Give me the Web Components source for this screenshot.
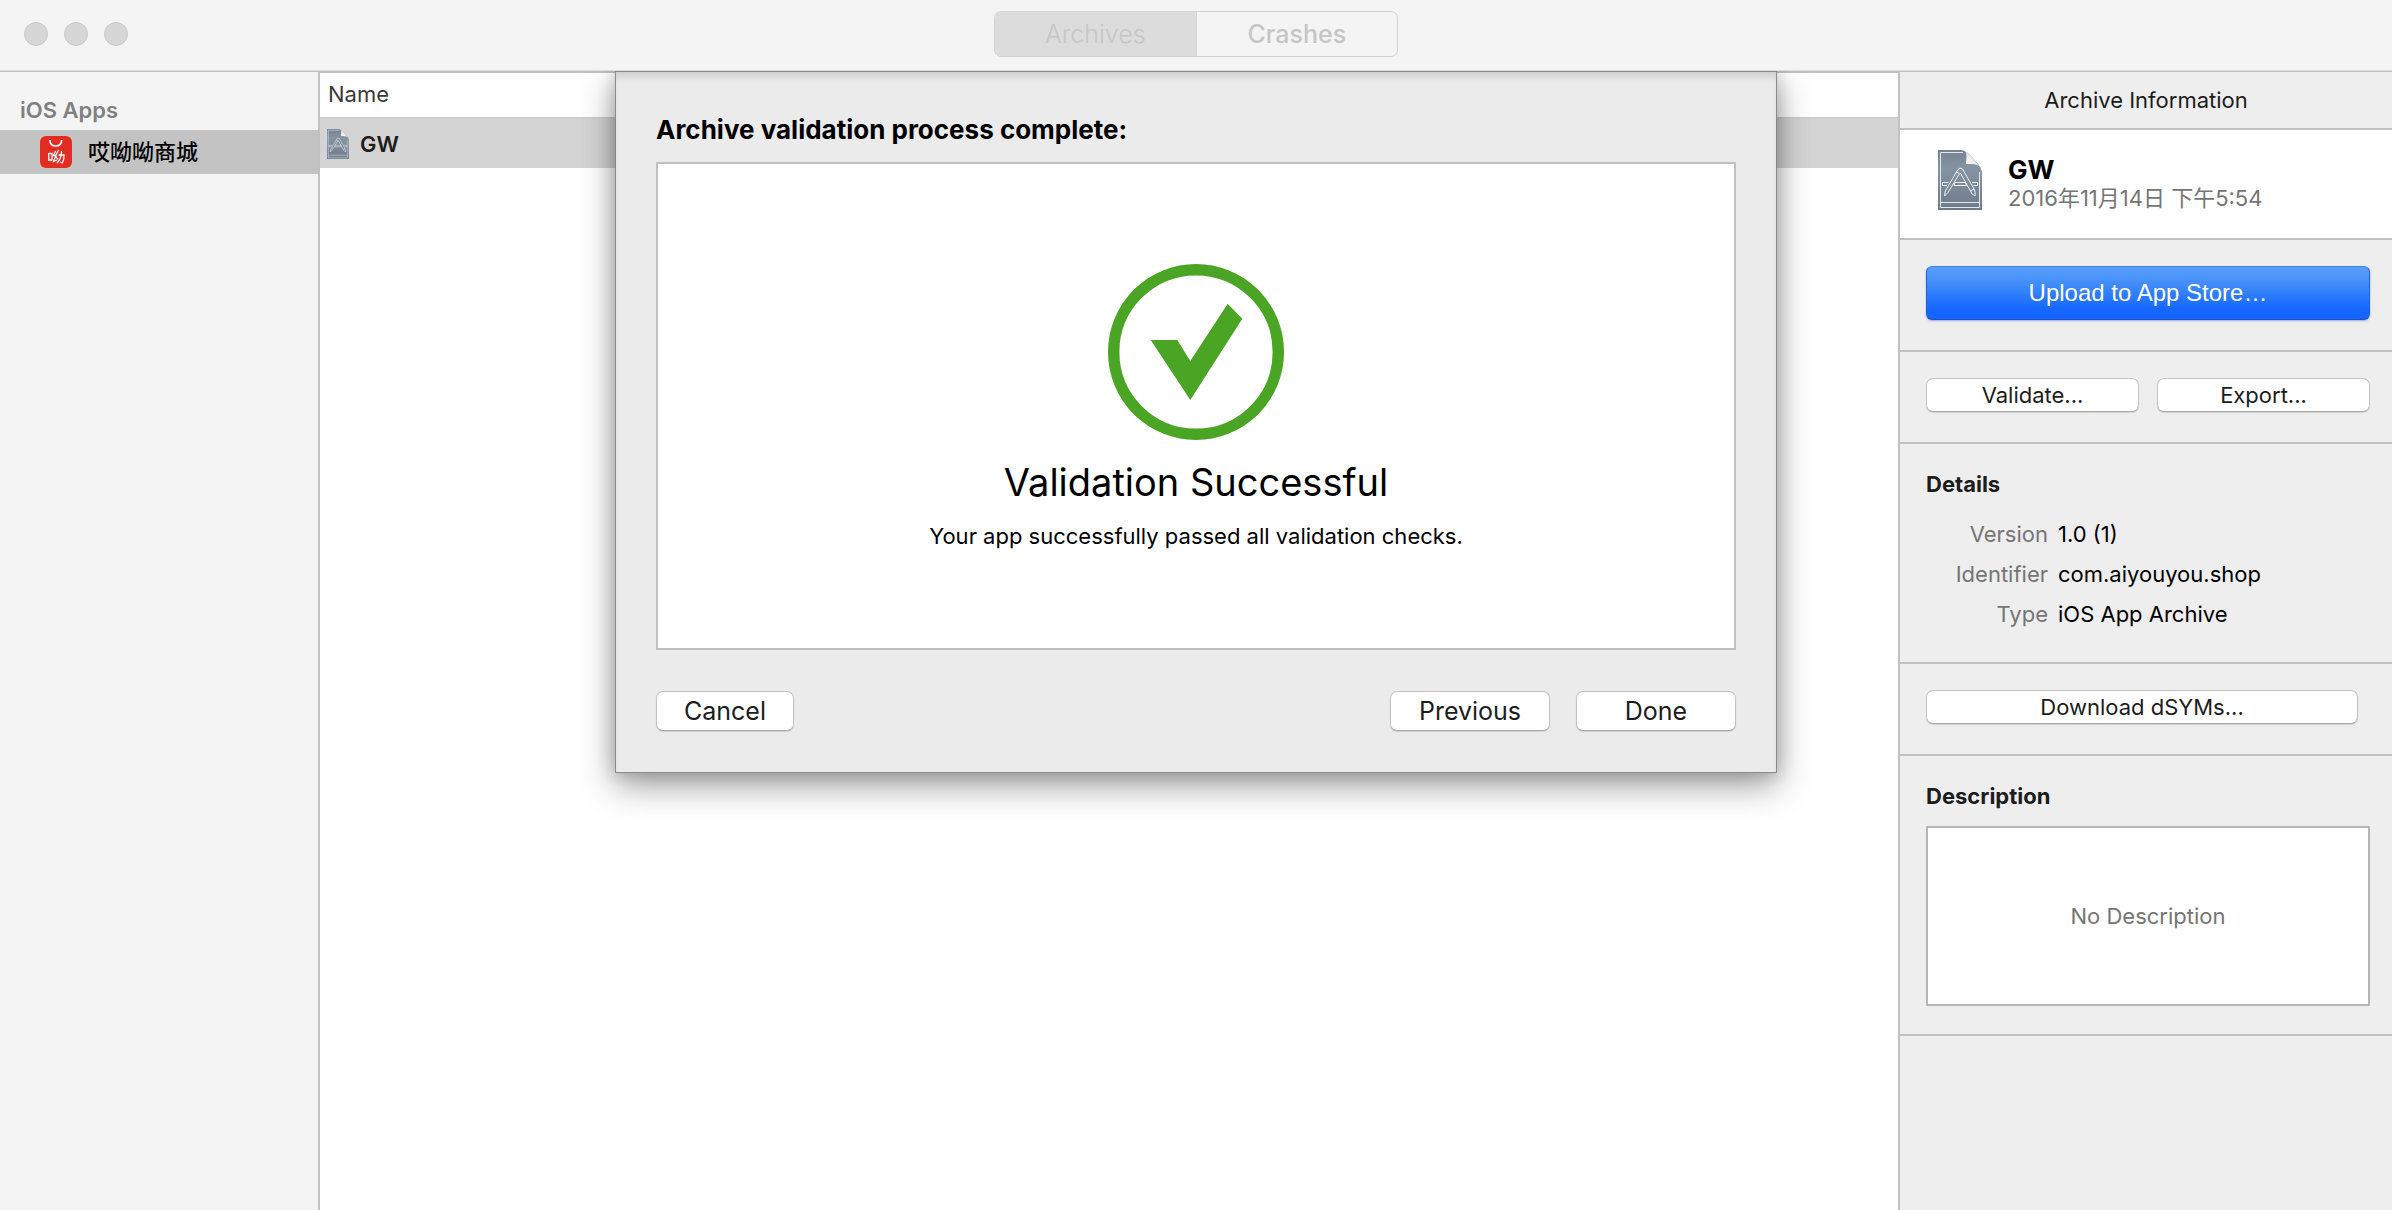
<!DOCTYPE html>
<html lang="en">
<head>
<meta charset="utf-8">
<title>Archives</title>
<style>
  html, body { margin: 0; height: 100%; }
  body {
    --line: #c1c1c1;
    --chrome: #f4f4f4;
    --panel: #eeeeee;
    --ink: #1c1c1c;
    --muted: #757575;
    font: 22px/28px Inter, "Noto Sans CJK SC", sans-serif;
    color: #000;
  }
</style>
</head>
<body>
<organizer-window></organizer-window>

<script>
const define = (name, html) => {
  const template = document.createElement('template');
  template.innerHTML = '<style>*{box-sizing:border-box}:host{display:block;box-sizing:border-box}</style>' + html;
  customElements.define(name, class extends HTMLElement {
    constructor() {
      super();
      this.attachShadow({ mode: 'open' }).append(template.content.cloneNode(true));
    }
  });
};

/* Push button: regular, size="large" for sheets, kind="primary" for the main action */
define('push-button', `
  <style>
    button {
      display: block; width: 100%; height: 34px; padding: 0 26px; margin: 0;
      font: inherit; line-height: 28px; color: var(--ink); text-align: center; white-space: nowrap;
      background: #fff; border: 1px solid #c3c3c3; border-bottom-color: #a9a9a9; border-radius: 7px;
      box-shadow: 0 1px 1px rgba(0,0,0,.12);
    }
    :host([size=large]) button { height: 40px; font-size: 25px; }
    :host([kind=primary]) button {
      height: 54px; font-family: "Liberation Sans", sans-serif; font-size: 24px; color: #fff;
      background: linear-gradient(#5a9ff9, #3f8bf8 35%, #1667ff 80%, #1464ff);
      border-color: #3f86ea #2560e0 #1c4fd0; border-radius: 6px;
      box-shadow: 0 1px 2px rgba(30,70,190,.4);
    }
  </style>
  <button type="button"><slot></slot></button>`);

define('archive-icon', `
  <style>:host { flex: none; width: 44px; height: 60px } svg { display: block; width: 100%; height: 100%; overflow: visible }</style>
  <svg viewBox="0 0 44 60" aria-hidden="true" fill="none">
    <defs>
      <linearGradient id="g" x2="0" y2="1"><stop stop-color="#758392"/><stop offset=".3" stop-color="#8593a3"/><stop offset="1" stop-color="#6e7b89"/></linearGradient>
      <linearGradient id="f" x1="0" y1="1" x2="1" y2="0"><stop stop-color="#fff"/><stop offset=".6" stop-color="#e4e4e4"/><stop offset="1" stop-color="#fafafa"/></linearGradient>
    </defs>
    <path d="M0 0H22C26 0 29 2 32 5L40 14Q44 19 44 24V60H0Z" fill="url(#g)"/>
    <path d="M25 2.5H2.5V57.5H41.5V22" stroke="#e3e9ee" stroke-width="1"/>
    <path d="M2.5 52.500H41.500" stroke="#e3e9ee" stroke-width="1"/>
    <path d="M27 1C29 3 28.500 9 28 14C33 14 38 14 41 16L34 7Z" fill="url(#f)"/>
    <g stroke="#eef2f5" stroke-width="1">
      <path d="M4.500 32.500H10.500M4.500 32.500V35.500H9M17 32.500H27.500L28.500 35.500H16ZM34 32.500H39.500V35.500H35.500"/>
      <path d="M18.500 22L21.500 23.700L10 42.500L6.500 46L7.300 41Z"/>
      <path d="M18.500 22L20 19.500L22 18L24.500 19L36 39Q38 42 37 46Q33 44 32.500 41L22 22.500"/>
      <path d="M32.500 41L36 39"/>
    </g>
  </svg>`);

define('shop-icon', `
  <style>:host { flex: none; width: 32px; height: 32px } svg { display: block }</style>
  <svg width="32" height="32" viewBox="0 0 32 32" aria-hidden="true">
    <rect width="32" height="32" rx="6" fill="#e22c24"/>
    <path d="M9.800 4C10 8 12.500 10 15.700 10S21.500 8 21.700 4" fill="none" stroke="#fff" stroke-width="1.700"/>
    <g fill="none" stroke="#fff" stroke-width="1.300">
      <path d="M8.800 17V25M8.800 17.500H12V24H8.800M15.500 15L13.500 19.500H16L13.500 25.500L17 24M18.500 14L15.500 20L18 23.500M18.500 19H24Q24 25 22 27L20.500 26M21.500 15Q21.500 23 17 27"/>
    </g>
  </svg>`);

define('window-toolbar', `
  <style>
    :host { background: var(--chrome); border-bottom: 1px solid #dcdcdc; flex: none }
    header { display: grid; grid-template-columns: 1fr auto 1fr; align-items: center; height: 70px; padding: 0 24px 2px }
    .lights { display: flex; gap: 16px }
    .lights button { width: 24px; height: 24px; padding: 0; border: 1px solid #c6c6c6; border-radius: 50%; background: #d6d6d6 }
    .tabs { display: flex; width: 404px; height: 46px; border: 1px solid #d2d2d2; border-radius: 7px; overflow: hidden }
    .tabs button { flex: 1; font: inherit; font-size: 25px; padding: 0; border: 0; background: none; color: #c6c6c6; font-weight: 500 }
    .tabs button[aria-pressed=true] { background: #dcdcdc; font-weight: 300; border-right: 1px solid #d2d2d2 }
  </style>
  <header>
    <div class="lights">
      <button type="button" aria-label="Close"></button><button type="button" aria-label="Minimize"></button><button type="button" aria-label="Zoom"></button>
    </div>
    <div class="tabs">
      <button type="button" aria-pressed="true">Archives</button>
      <button type="button" aria-pressed="false">Crashes</button>
    </div>
  </header>`);

define('app-sidebar', `
  <style>
    :host { background: var(--chrome); border-top: 1px solid var(--line); border-right: 2px solid var(--line); padding-top: 24px }
    h2 { margin: 0 0 6px; padding: 0 20px; font: inherit; font-weight: 600; color: #808080 }
    a { display: flex; align-items: center; gap: 16px; height: 44px; padding: 0 40px; background: #c3c3c3; color: #000; font-weight: 500; text-decoration: none }
  </style>
  <nav>
    <h2>iOS Apps</h2>
    <a href="#app"><shop-icon></shop-icon><span><slot></slot></span></a>
  </nav>`);

define('archive-list', `
  <style>
    :host { background: #fff; border-top: 2px solid var(--line) }
    table { width: 100%; border-collapse: collapse }
    th { height: 44px; padding: 0 8px 2px; text-align: left; font-weight: 400; color: #3a3a3a }
    td { height: 51px; padding: 2px 6px 0; background: #d4d4d4; border-top: 1px solid #cacaca; font-weight: 600; color: var(--ink) }
    div { display: flex; align-items: center; gap: 10px }
    archive-icon { width: 24px; height: 30px }
  </style>
  <table>
    <thead><tr><th scope="col">Name</th></tr></thead>
    <tbody><tr><td><div><archive-icon></archive-icon><slot></slot></div></td></tr></tbody>
  </table>`);

define('panel-section', `
  <style>
    :host { padding: 26px 22px 30px 26px; border-bottom: 2px solid var(--line) }
    :host([roomy]) { padding-bottom: 34px }
    :host([snug]) { padding-bottom: 28px }
  </style><slot></slot>`);

define('archive-inspector', `
  <style>
    :host { background: var(--panel); border-top: 1px solid var(--line); border-left: 2px solid var(--line) }
    h2 { margin: 0; height: 58px; padding: 14px; border-bottom: 2px solid var(--line); font: inherit; text-align: center; color: var(--ink) }
    .item { display: flex; align-items: center; gap: 26px; height: 110px; padding: 20px 38px; background: #fff; border-bottom: 2px solid var(--line) }
    .item archive-icon { align-self: flex-start }
    .item strong { display: block; font-size: 26px; font-weight: 700 }
    time { color: var(--muted) }
    .pair { display: grid; grid-template-columns: 1fr 1fr; gap: 18px }
    h3, label { display: block; margin: 0; font: inherit; font-weight: 700; color: var(--ink) }
    dl { display: grid; grid-template-columns: 122px 1fr; gap: 12px 10px; margin: 22px 0 0 }
    dt { text-align: right; color: var(--muted) }
    dd { margin: 0 }
    .inset { padding-right: 12px }
    textarea {
      display: block; width: 100%; height: 180px; margin: 16px 0 0; padding: 74px 16px 0; resize: none;
      border: 2px solid #b5b5b5; border-radius: 0; background: #fff; font: inherit; text-align: center; color: #000; overflow: hidden
    }
    textarea::placeholder { color: var(--muted); opacity: 1 }
  </style>
  <aside>
    <h2>Archive Information</h2>
    <div class="item"><archive-icon></archive-icon><div><strong>GW</strong><time datetime="2016-11-14T17:54">2016年11月14日 下午5:54</time></div></div>
    <panel-section><push-button kind="primary">Upload to App Store…</push-button></panel-section>
    <panel-section><div class="pair"><push-button>Validate...</push-button><push-button>Export...</push-button></div></panel-section>
    <panel-section roomy>
      <h3>Details</h3>
      <dl>
        <dt>Version</dt><dd>1.0 (1)</dd>
        <dt>Identifier</dt><dd>com.aiyouyou.shop</dd>
        <dt>Type</dt><dd>iOS App Archive</dd>
      </dl>
    </panel-section>
    <panel-section><div class="inset"><push-button>Download dSYMs...</push-button></div></panel-section>
    <panel-section snug>
      <label for="description">Description</label>
      <textarea id="description" placeholder="No Description"></textarea>
    </panel-section>
  </aside>`);

define('success-mark', `
  <style>svg { display: block }</style>
  <svg width="176" height="176" viewBox="0 0 176 176" role="img" aria-label="Success">
    <circle cx="88" cy="88" r="82.300" fill="none" stroke="#4ba524" stroke-width="11.400"/>
    <path d="M42.700 76H69.300L82.300 97L119.700 39.700L134.300 54.700L82.300 136Z" fill="#4ba524"/>
  </svg>`);

define('validation-sheet', `
  <style>
    :host {
      width: 1162px; max-width: 100%; padding: 42px 40px 41px; background: #ebebeb;
      border: 1px solid #8a8a8a;
      box-shadow: 0 12px 32px rgba(0,0,0,.4), 0 0 16px rgba(0,0,0,.16), inset 0 8px 8px -4px rgba(0,0,0,.14)
    }
    h1 { margin: 0 0 16px; font-size: 26px; line-height: 32px; font-weight: 700 }
    .result {
      display: flex; flex-direction: column; align-items: center; justify-content: center; min-height: 488px;
      padding-top: 2px; border: 2px solid #c0c0c0; background: #fff; text-align: center
    }
    h2 { margin: 18px 0 16px; font-size: 38px; line-height: 48px; font-weight: 400 }
    p { margin: 0 }
    footer { display: flex; gap: 26px; margin-top: 41px }
    footer push-button { width: 160px }
    footer push-button:first-child { width: 138px; margin-right: auto }
  </style>
  <section role="dialog" aria-labelledby="title">
    <h1 id="title">Archive validation process complete:</h1>
    <div class="result">
      <success-mark></success-mark>
      <h2>Validation Successful</h2>
      <p>Your app successfully passed all validation checks.</p>
    </div>
    <footer>
      <push-button size="large">Cancel</push-button>
      <push-button size="large">Previous</push-button>
      <push-button size="large">Done</push-button>
    </footer>
  </section>`);

define('organizer-window', `
  <style>
    :host { display: flex; flex-direction: column; min-height: 100vh }
    main { position: relative; flex: 1; display: grid; grid-template-columns: 320px 1fr 494px; overflow: hidden }
    .overlay { position: absolute; inset: 0 0 auto; display: flex; justify-content: center }
  </style>
  <window-toolbar></window-toolbar>
  <main>
    <app-sidebar>哎呦呦商城</app-sidebar>
    <archive-list>GW</archive-list>
    <archive-inspector></archive-inspector>
    <div class="overlay"><validation-sheet></validation-sheet></div>
  </main>`);
</script>
</body>
</html>
